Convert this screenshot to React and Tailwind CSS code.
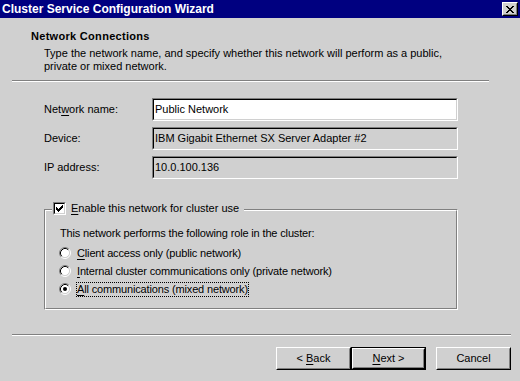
import React from "react";

const BG = "bg-[#d0d0d0]";

function Key({ children }) {
    return <span className="underline underline-offset-[2px]">{children}</span>;
}

function Sunken({ children, white }) {
    return (
        <div className="w-[306px] h-[23px] border border-t-[#808080] border-l-[#808080] border-b-white border-r-white">
            <div
                className={`h-full border border-t-black border-l-black border-b-[#d0d0d0] border-r-[#d0d0d0] flex items-center pl-[1px] ${
                    white ? "bg-white" : BG
                }`}
            >
                {children}
            </div>
        </div>
    );
}

function Field({ label, value, white }) {
    return (
        <div className="flex items-center pl-[44px]">
            <div className="w-[108px]">{label}</div>
            <Sunken white={white}>{value}</Sunken>
        </div>
    );
}

function Checkbox() {
    const cols = [3, 4, 5, 4, 3, 2, 1];
    return (
        <div className="w-[13px] h-[13px] border border-t-[#808080] border-l-[#808080] border-b-white border-r-white">
            <div className="w-full h-full bg-white border border-t-black border-l-black border-b-[#d0d0d0] border-r-[#d0d0d0]">
                <svg width="9" height="9" viewBox="0 0 9 9" shapeRendering="crispEdges">
                    {cols.map((y, i) => (
                        <rect key={i} x={i + 1} y={y} width="1" height="3" fill="black" />
                    ))}
                </svg>
            </div>
        </div>
    );
}

function Radio({ checked }) {
    return (
        <svg width="12" height="12" viewBox="0 0 12 12" className="shrink-0">
            <circle cx="6" cy="6" r="4.5" fill="white" />
            <path d="M2.11 9.89A5.5 5.5 0 0 1 9.89 2.11" stroke="#808080" fill="none" />
            <path d="M9.89 2.11A5.5 5.5 0 0 1 2.11 9.89" stroke="white" fill="none" />
            <path d="M2.82 9.18A4.5 4.5 0 0 1 9.18 2.82" stroke="black" fill="none" />
            <path d="M9.18 2.82A4.5 4.5 0 0 1 2.82 9.18" stroke="#d0d0d0" fill="none" />
            {checked && <circle cx="6" cy="6" r="2" fill="black" />}
        </svg>
    );
}

function RadioRow({ checked, children }) {
    return (
        <div className="h-[18px] flex items-center pl-[13px] gap-[5px]">
            <Radio checked={checked} />
            <span
                className={`leading-[13px] border tracking-[-0.15px] ${
                    checked ? "border-dotted border-black" : "border-transparent"
                }`}
            >
                {children}
            </span>
        </div>
    );
}

function Button({ children, isDefault, className = "" }) {
    return (
        <div
            className={`w-[75px] h-[23px] ${
                isDefault ? "border border-black" : ""
            } ${className}`}
        >
            <div className="w-full h-full border border-t-white border-l-white border-b-black border-r-black">
                <div className="w-full h-full border border-t-[#d0d0d0] border-l-[#d0d0d0] border-b-[#808080] border-r-[#808080] flex items-center justify-center">
                    <span>{children}</span>
                </div>
            </div>
        </div>
    );
}

export default function App() {
    return (
        <div
            className={`w-[520px] h-[381px] overflow-hidden ${BG} text-black text-[11px] leading-[13px]`}
            style={{ fontFamily: '"Liberation Sans", Arial, sans-serif' }}
        >
            {/* title bar */}
            <div className="h-[18px] bg-[#000080] flex items-center justify-between pl-[2px] pr-[2px]">
                <span className="text-white font-bold text-[12px]">Cluster Service Configuration Wizard</span>
                <div className="w-[16px] h-[14px] border border-t-white border-l-white border-b-black border-r-black">
                    <div className={`w-full h-full ${BG} border border-t-[#d0d0d0] border-l-[#d0d0d0] border-b-[#808080] border-r-[#808080] flex items-center justify-center`}>
                        <svg width="8" height="7" viewBox="0 0 8 7" shapeRendering="crispEdges">
                            <path d="M0 0h2l2 2.5L6 0h2L5 3.5 8 7H6L4 4.5 2 7H0l3-3.5z" fill="black" />
                        </svg>
                    </div>
                </div>
            </div>

            {/* header */}
            <div className="pt-[12px] pl-[31px] font-bold tracking-[0.3px]">Network Connections</div>
            <div className="mt-[4px] pl-[44px] pr-[60px]">
                Type the network name, and specify whether this network will perform as a public,
                private or mixed network.
            </div>
            <div className="mt-[7px] ml-[12px] w-[477px] border-t border-t-[#808080] border-b border-b-white" />

            {/* fields */}
            <div className="mt-[16px] flex flex-col gap-[6px]">
                <Field label={<>Net<Key>w</Key>ork name:</>} value="Public Network" white />
                <Field label="Device:" value="IBM Gigabit Ethernet SX Server Adapter #2" />
                <Field label="IP address:" value="10.0.100.136" />
            </div>

            {/* group box */}
            <div className="relative mt-[30px] ml-[44px] w-[414px] h-[101px] border border-t-[#808080] border-l-[#808080] border-b-white border-r-white">
                <div className="h-full border border-t-white border-l-white border-b-[#808080] border-r-[#808080] pt-[16px]">
                    <div className="pl-[14px] tracking-[-0.15px]">This network performs the following role in the cluster:</div>
                    <div className="mt-[4px]">
                        <RadioRow>
                            <Key>C</Key>lient access only (public network)
                        </RadioRow>
                        <RadioRow>
                            <Key>I</Key>nternal cluster communications only (private network)
                        </RadioRow>
                        <RadioRow checked>
                            <Key>A</Key>ll communications (mixed network)
                        </RadioRow>
                    </div>
                </div>
                <div className={`absolute top-[-8px] left-[7px] ${BG} flex items-center gap-[5px] pl-[1px] pr-[5px]`}>
                    <Checkbox />
                    <span>
                        <Key>E</Key>nable this network for cluster use
                    </span>
                </div>
            </div>

            {/* bottom */}
            <div className="mt-[24px] ml-[12px] w-[499px] border-t border-t-[#808080] border-b border-b-white" />
            <div className="mt-[11px] flex justify-end pr-[9px]">
                <Button>
                    &lt; <Key>B</Key>ack
                </Button>
                <Button isDefault>
                    <Key>N</Key>ext &gt;
                </Button>
                <Button className="ml-[10px]">Cancel</Button>
            </div>
        </div>
    );
}
